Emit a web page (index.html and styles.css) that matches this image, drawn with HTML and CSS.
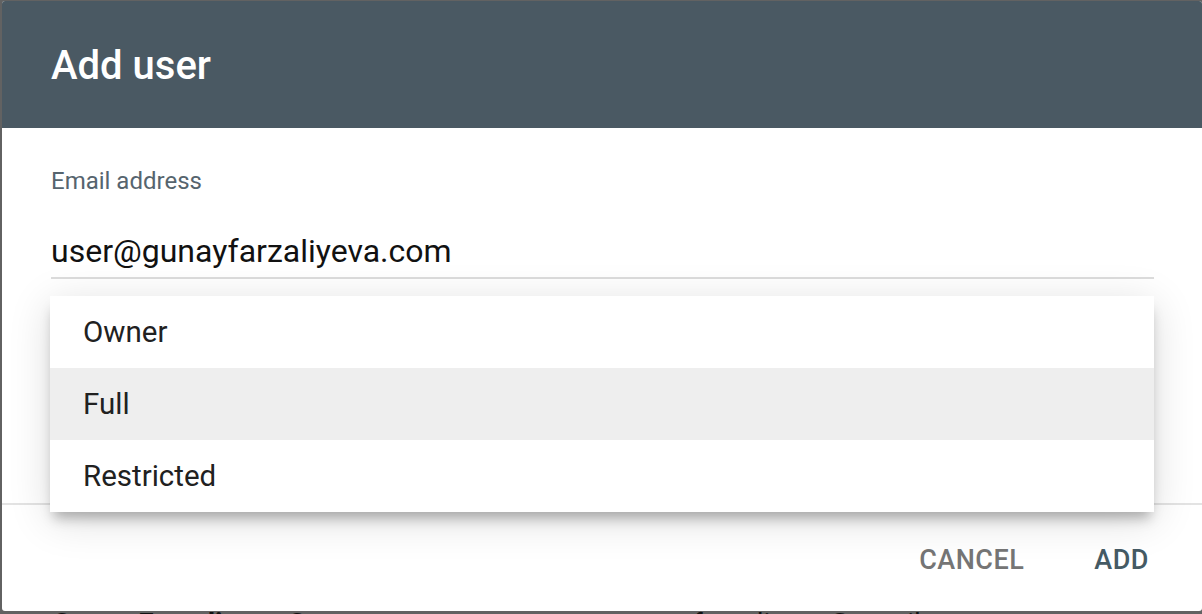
FILE: index.html
```html
<!DOCTYPE html>
<html>
<head>
<meta charset="utf-8">
<link rel="stylesheet" href="styles.css">
</head>
<body>
<div class="dialog">
  <div class="header"><h1 class="title">Add user</h1></div>
  <div class="content">
    <div class="label">Email address</div>
    <div class="input">user@gunayfarzaliyeva.com</div>
  </div>
  <div class="actions">
    <span class="btn cancel">CANCEL</span>
    <span class="btn add">ADD</span>
  </div>
  <div class="menu">
    <div class="item">Owner</div>
    <div class="item active">Full</div>
    <div class="item">Restricted</div>
  </div>
</div>
<div class="behind">
  <div class="behind-row">
    <span class="b1">Gunay Farzaliyeva Gunay</span>
    <span class="b2">gunayfarzaliyeva@gmail.com</span>
  </div>
</div>
</body>
</html>
```
FILE: styles.css
```css
html, body {
  margin: 0;
  padding: 0;
}
body {
  width: 1202px;
  height: 614px;
  overflow: hidden;
  background: #626262;
  font-family: Roboto, "Liberation Sans", sans-serif;
}
.dialog {
  position: relative;
  margin: 1px 0 0 2px;
  width: 1200px;
  height: 610px;
  background: #ffffff;
  border-radius: 3px;
  overflow: hidden;
  display: flex;
  flex-direction: column;
}
.header {
  height: 127px;
  flex: none;
  background: #4a5963;
  display: flex;
  align-items: center;
  padding-left: 49px;
}
.title {
  margin: 0;
  color: #ffffff;
  font-size: 40px;
  font-weight: 500;
  line-height: 1;
  padding-top: 2px;
}
.content {
  height: 377px;
  flex: none;
  box-sizing: border-box;
  padding: 41px 48px 0 49px;
  border-bottom: 2px solid #e3e3e3;
}
.label {
  font-size: 24px;
  line-height: 24px;
  color: #56646e;
}
.input {
  margin-top: 42px;
  font-size: 32px;
  line-height: 32px;
  color: #111111;
  padding-bottom: 10px;
  border-bottom: 2px solid #dcdcdc;
}
.actions {
  flex: 1;
  display: flex;
  justify-content: flex-end;
  align-items: center;
  padding: 4px 53px 0 0;
  gap: 70px;
}
.btn {
  font-size: 27px;
  font-weight: 500;
  line-height: 1;
  letter-spacing: 0.5px;
}
.cancel { color: #757575; }
.add { color: #455a64; }
.menu {
  position: absolute;
  left: 48px;
  top: 295px;
  width: 1104px;
  background: #ffffff;
  box-shadow: 0 10px 12px -4px rgba(0,0,0,0.28), 0 8px 40px rgba(0,0,0,0.14);
}
.item {
  height: 72px;
  display: flex;
  align-items: center;
  padding-left: 33px;
  font-size: 29.5px;
  color: #212121;
}
.item.active {
  background: #eeeeee;
}
.behind {
  height: 3px;
  overflow: hidden;
}
.behind-row {
  margin-top: -1px;
  display: flex;
  font-size: 28px;
  font-weight: 700;
  line-height: 1;
  color: #111111;
}
.b1 { margin-left: 52px; width: 566px; }
.b2 { font-weight: 400; }
```
